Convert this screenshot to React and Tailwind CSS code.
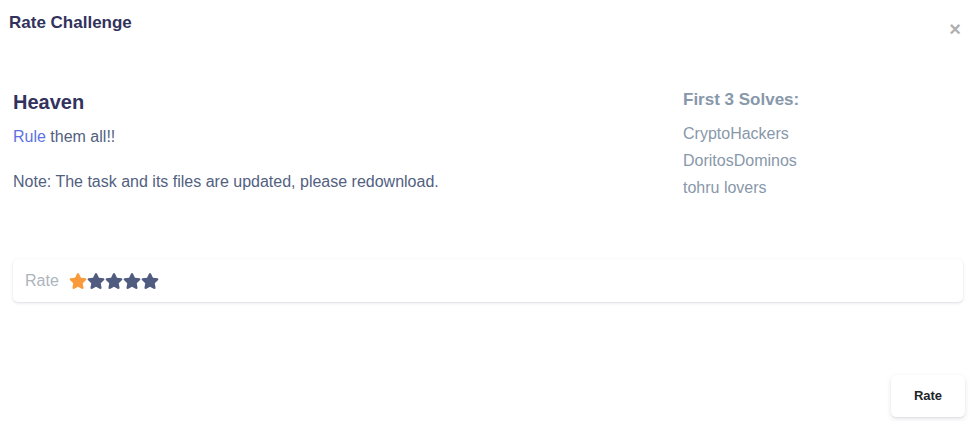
import { FaStar } from 'react-icons/fa';

const solvers = ['CryptoHackers', 'DoritosDominos', 'tohru lovers'];

const App = () => {
  const rating = 1;

  return (
    <div className="w-[976px] h-[421px] bg-white font-['Liberation_Sans',Arial,sans-serif] relative overflow-hidden">
      {/* Header */}
      <div className="flex items-start justify-between pl-[9px] pr-[15px] pt-[13px]">
        <h5 className="text-[17px] font-bold text-[#32325d] leading-[20px]">Rate Challenge</h5>
        <button className="text-[#b0b0b0] text-[20px] font-bold leading-none mt-[6px]">×</button>
      </div>

      {/* Body */}
      <div className="px-[13px] pt-[51px]">
        <div className="flex">
          <div className="w-[670px]">
            <h3 className="text-[20px] font-bold text-[#32325d] leading-[24px]">Heaven</h3>
            <p className="text-[16px] text-[#525f7f] mt-[11px] leading-[24px]">
              <span className="text-[#5e72e4]">Rule</span> them all!!
            </p>
            <p className="text-[16px] text-[#525f7f] mt-[21px] leading-[24px]">
              Note: The task and its files are updated, please redownload.
            </p>
          </div>
          <div className="flex-1">
            <h4 className="text-[17px] font-bold text-[#8898aa] leading-[22px] -mt-[1px]">First 3 Solves:</h4>
            <div className="mt-[9px]">
              {solvers.map((s) => (
                <div key={s} className="text-[16px] text-[#8898aa] leading-[27px]">{s}</div>
              ))}
            </div>
          </div>
        </div>

        {/* Rate card */}
        <div className="mt-[58px] h-[43px] rounded-[5px] bg-white shadow-[0_1px_3px_rgba(50,50,93,0.15),0_1px_0_rgba(0,0,0,0.02)] flex items-center px-[12px]">
          <span className="text-[16px] text-[#adb5bd]">Rate</span>
          <div className="flex ml-[10px]">
            {[1, 2, 3, 4, 5].map((n) => (
              <FaStar
                key={n}
                size={18}
                className={n <= rating ? 'text-[#fb9a3a]' : 'text-[#4f5b7f]'}
              />
            ))}
          </div>
        </div>
      </div>

      {/* Footer */}
      <div className="absolute right-[11px] bottom-[4px]">
        <button className="w-[74px] h-[42px] rounded-[5px] bg-white shadow-[0_2px_5px_rgba(50,50,93,0.12),0_1px_2px_rgba(0,0,0,0.06)] text-[13px] font-bold text-[#212529]">
          Rate
        </button>
      </div>
    </div>
  );
};

export default App;
